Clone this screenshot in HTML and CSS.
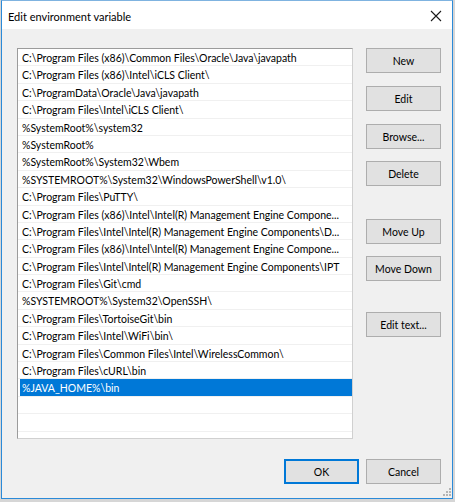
FILE: index.html
```html
<!DOCTYPE html>
<html>
<head>
<meta charset="utf-8">
<link rel="stylesheet" href="styles.css">
</head>
<body>
<div class="window">
  <div class="titlebar">
    <span class="title">Edit environment variable</span>
    <svg class="close" width="12" height="12" viewBox="0 0 12 12"><path d="M1 1 L11 11 M11 1 L1 11" stroke="#1a1a1a" stroke-width="1.1" fill="none"/></svg>
  </div>
  <div class="client">
    <div class="main">
      <div class="list">
        <div class="row">C:\Program Files (x86)\Common Files\Oracle\Java\javapath</div>
        <div class="row">C:\Program Files (x86)\Intel\iCLS Client\</div>
        <div class="row">C:\ProgramData\Oracle\Java\javapath</div>
        <div class="row">C:\Program Files\Intel\iCLS Client\</div>
        <div class="row">%SystemRoot%\system32</div>
        <div class="row">%SystemRoot%</div>
        <div class="row">%SystemRoot%\System32\Wbem</div>
        <div class="row">%SYSTEMROOT%\System32\WindowsPowerShell\v1.0\</div>
        <div class="row">C:\Program Files\PuTTY\</div>
        <div class="row">C:\Program Files (x86)\Intel\Intel(R) Management Engine Compone...</div>
        <div class="row">C:\Program Files\Intel\Intel(R) Management Engine Components\D...</div>
        <div class="row">C:\Program Files (x86)\Intel\Intel(R) Management Engine Compone...</div>
        <div class="row">C:\Program Files\Intel\Intel(R) Management Engine Components\IPT</div>
        <div class="row">C:\Program Files\Git\cmd</div>
        <div class="row">%SYSTEMROOT%\System32\OpenSSH\</div>
        <div class="row">C:\Program Files\TortoiseGit\bin</div>
        <div class="row">C:\Program Files\Intel\WiFi\bin\</div>
        <div class="row">C:\Program Files\Common Files\Intel\WirelessCommon\</div>
        <div class="row">C:\Program Files\cURL\bin</div>
        <div class="row selected">%JAVA_HOME%\bin</div>
        <div class="row"></div>
        <div class="row"></div>
        <div class="row"></div>
      </div>
      <div class="side">
        <button class="btn b-new">New</button>
        <button class="btn b-edit">Edit</button>
        <button class="btn b-browse">Browse...</button>
        <button class="btn b-delete">Delete</button>
        <button class="btn b-up">Move Up</button>
        <button class="btn b-down">Move Down</button>
        <button class="btn b-text">Edit text...</button>
      </div>
    </div>
    <div class="footer">
      <button class="btn ok">OK</button>
      <button class="btn">Cancel</button>
    </div>
  </div>
  <svg class="grip" width="8" height="8" viewBox="0 0 8 8">
    <rect x="6" y="0" width="2" height="2" fill="#b4b4b4"/>
    <rect x="3" y="3" width="2" height="2" fill="#b4b4b4"/>
    <rect x="6" y="3" width="2" height="2" fill="#b4b4b4"/>
    <rect x="0" y="6" width="2" height="2" fill="#b4b4b4"/>
    <rect x="3" y="6" width="2" height="2" fill="#b4b4b4"/>
    <rect x="6" y="6" width="2" height="2" fill="#b4b4b4"/>
  </svg>
</div>
</body>
</html>
```
FILE: styles.css
```css
html, body {
  margin: 0;
  padding: 0;
}
body {
  background: #d6d6d6;
  width: 455px;
  height: 502px;
  overflow: hidden;
  font-family: "Lato", "Noto Sans", sans-serif;
  font-size: 10.5px;
  color: #000;
}
.window {
  position: relative;
  margin-left: 1px;
  width: 452px;
  height: 499px;
  box-sizing: border-box;
  border: 1px solid #2b8ad8;
  border-top-color: #7fb3e0;
  background: #f0f0f0;
  display: flex;
  flex-direction: column;
}
.titlebar {
  height: 28px;
  background: #fff;
  display: flex;
  align-items: center;
  justify-content: space-between;
  padding: 0 10px 0 6px;
}
.title {
  font-size: 11px;
  padding-top: 2px;
}
.close {
  display: block;
  margin-top: 2px;
}
.client {
  padding: 19px 11px 0 15px;
}
.main {
  display: flex;
  gap: 13px;
  align-items: flex-start;
}
.list {
  width: 337px;
  height: 391px;
  box-sizing: border-box;
  border: 1px solid #a9a9a9;
  border-color: #9b9b9b #d0d0d0 #d0d0d0 #9b9b9b;
  background: #fff;
  overflow: hidden;
}
.row {
  height: 17.4px;
  line-height: 16.4px;
  padding-top: 1px;
  box-sizing: border-box;
  border-bottom: 1px solid #f0f0f0;
  padding-left: 4px;
  white-space: nowrap;
  overflow: hidden;
}
.row.selected {
  background: linear-gradient(to right, #fff 2px, #0078d7 2px);
  color: #fff;
}
.side {
  display: flex;
  flex-direction: column;
  width: 75px;
}
.btn {
  width: 75px;
  height: 25px;
  box-sizing: border-box;
  background: #e1e1e1;
  border: 1px solid #adadad;
  font-family: inherit;
  font-size: 10.5px;
  color: #000;
  padding: 1px 0 0 0;
  margin: 0;
}
.b-edit, .b-browse { margin-top: 13px; }
.b-delete { margin-top: 12px; }
.b-up { margin-top: 33px; }
.b-down { margin-top: 12px; }
.b-text { margin-top: 31px; }
.footer {
  display: flex;
  justify-content: flex-end;
  gap: 7px;
  margin-top: 20px;
}
.btn.ok {
  border: 1px solid #0078d7;
  box-shadow: inset 0 0 0 1px #0078d7;
}
.grip {
  position: absolute;
  right: 1px;
  bottom: 2px;
}
```
